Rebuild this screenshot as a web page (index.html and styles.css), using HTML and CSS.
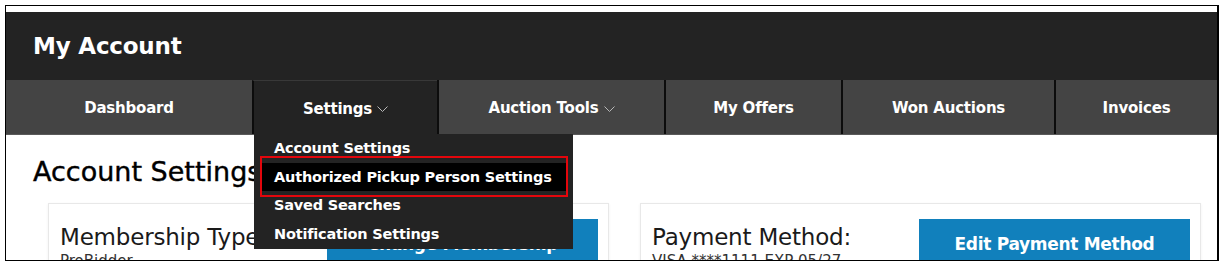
FILE: index.html
```html
<!DOCTYPE html>
<html lang="en">
<head>
    <meta charset="UTF-8">
    <meta name="viewport" content="width=device-width, initial-scale=1.0">
    <title>My Account</title>
    <link rel="stylesheet" href="styles.css">
</head>
<body>
    <div class="frame">
        <header class="account-header">
            <h1>My Account</h1>
        </header>

        <nav class="account-nav">
            <div class="nav-item nav-dashboard">Dashboard</div>
            <div class="nav-item nav-settings active">
                Settings
                <svg class="chevron" width="11" height="7" viewBox="0 0 11 7"><polyline points="0.5,0.5 5.5,5.5 10.5,0.5" fill="none" stroke="#b8b8b8" stroke-width="1"/></svg>
                <div class="dropdown">
                    <div class="dropdown-item">Account Settings</div>
                    <div class="dropdown-item current">Authorized Pickup Person Settings</div>
                    <div class="dropdown-item">Saved Searches</div>
                    <div class="dropdown-item">Notification Settings</div>
                    <div class="highlight-box"></div>
                </div>
            </div>
            <div class="nav-item nav-tools">
                Auction Tools
                <svg class="chevron" width="11" height="7" viewBox="0 0 11 7"><polyline points="0.5,0.5 5.5,5.5 10.5,0.5" fill="none" stroke="#b8b8b8" stroke-width="1"/></svg>
            </div>
            <div class="nav-item nav-offers">My Offers</div>
            <div class="nav-item nav-won">Won Auctions</div>
            <div class="nav-item nav-invoices">Invoices</div>
        </nav>

        <main class="content">
            <h2>Account Settings</h2>
            <div class="cards">
                <div class="card">
                    <div class="card-info">
                        <div class="card-title">Membership Type</div>
                        <div class="card-sub">ProBidder</div>
                    </div>
                    <button class="card-btn">Change Membership</button>
                </div>
                <div class="card">
                    <div class="card-info">
                        <div class="card-title">Payment Method:</div>
                        <div class="card-sub">VISA ****1111 EXP 05/27</div>
                    </div>
                    <button class="card-btn">Edit Payment Method</button>
                </div>
            </div>
        </main>
    </div>
</body>
</html>
```

FILE: styles.css
```css
:root {
    --header-bg: #232323;
    --nav-bg: #444444;
    --nav-active: #232323;
    --separator: #0c0c0c;
    --blue: #1180bc;
    --text-dark: #1a1a1a;
    --card-border: #e8e8e8;
}

body {
    margin: 0;
    padding: 0;
    background-color: #ffffff;
    font-family: 'DejaVu Sans', 'Verdana', sans-serif;
}

.frame {
    margin: 5px 0 0 5px;
    width: 1211px;
    height: 248px;
    padding-top: 6px;
    border: 1px solid #000;
    border-right-width: 2px;
    overflow: hidden;
    background-color: #ffffff;
}

.account-header {
    background-color: var(--header-bg);
    height: 68px;
    display: flex;
    align-items: center;
    padding-left: 27px;
}

.account-header h1 {
    margin: 0;
    color: #ffffff;
    font-size: 23px;
    font-weight: bold;
    letter-spacing: -0.2px;
}

.account-nav {
    display: flex;
    height: 55px;
    background-color: var(--nav-bg);
    border-bottom: 1px solid #5a5a5a;
    box-sizing: border-box;
}

.nav-item {
    position: relative;
    display: flex;
    align-items: center;
    justify-content: center;
    gap: 5px;
    padding-top: 2px;
    color: #ffffff;
    font-size: 15px;
    font-weight: bold;
    letter-spacing: -0.2px;
    border-left: 2px solid var(--separator);
    box-sizing: border-box;
}

.nav-dashboard { width: 246px; border-left: none; }
.nav-settings { width: 185px; }
.nav-tools { width: 227px; }
.nav-offers { width: 177px; }
.nav-won { width: 213px; }
.nav-invoices { flex: 1; }

.nav-item.active {
    background-color: var(--nav-active);
    border-top: 1px solid #383838;
}

.chevron {
    margin-top: 2px;
}

.dropdown {
    position: absolute;
    top: 100%;
    left: 0;
    width: 319px;
    height: 115px;
    background-color: var(--header-bg);
    z-index: 5;
}

.dropdown-item {
    height: 28.5px;
    line-height: 28px;
    padding-left: 20px;
    margin: 0 7px 0 0;
    color: #ffffff;
    font-size: 14.5px;
    font-weight: bold;
    letter-spacing: -0.2px;
    white-space: nowrap;
}

.dropdown-item.current {
    background-color: #000000;
    margin-left: 7px;
    padding-left: 13px;
}

.highlight-box {
    position: absolute;
    left: 6px;
    top: 22px;
    width: 304px;
    height: 37px;
    border: 2px solid #e3060c;
}

.content {
    padding: 0 0 0 27px;
}

.content h2 {
    margin: 21px 0 0 0;
    font-size: 27px;
    font-weight: normal;
    color: #000000;
    -webkit-text-stroke: 0.4px #000;
}

.cards {
    display: grid;
    grid-template-columns: 561px 561px;
    gap: 31px;
    margin: 16px 0 0 15px;
}

.card {
    display: flex;
    justify-content: space-between;
    padding: 15px 10px 20px 11px;
    border: 1px solid var(--card-border);
    box-shadow: 0 1px 3px rgba(0, 0, 0, 0.06);
}

.card-info {
    padding-top: 5px;
}

.card-title {
    font-size: 23px;
    color: var(--text-dark);
    letter-spacing: -0.2px;
}

.card-sub {
    font-size: 15px;
    color: #333333;
    margin-top: 2px;
}

.card-btn {
    width: 271px;
    height: 52px;
    padding: 0 0 3px 0;
    background-color: var(--blue);
    color: #ffffff;
    border: none;
    font-family: inherit;
    font-size: 17px;
    font-weight: bold;
    letter-spacing: -0.3px;
}
```
